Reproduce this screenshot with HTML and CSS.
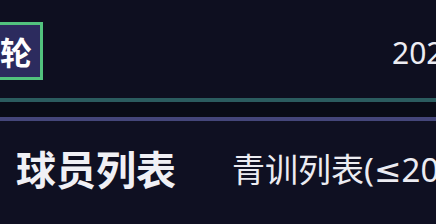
FILE: index.html
```html
<!DOCTYPE html>
<html lang="zh-CN">
<head>
    <meta charset="UTF-8">
    <meta name="viewport" content="width=device-width, initial-scale=1.0">
    <title>球员列表</title>
    <link rel="stylesheet" href="styles.css">
</head>
<body>
    <!-- 顶部：轮次 + 赛季 -->
    <div class="top-bar">
        <div class="round-badge">轮</div>
        <div class="season">2024-25赛季</div>
    </div>

    <div class="divider-gap"></div>

    <!-- 列表标题 -->
    <div class="list-head">
        <h2 class="list-title">球员列表</h2>
        <span class="list-sub">青训列表(≤20岁)</span>
    </div>
</body>
</html>
```

FILE: styles.css
```css
/* Reset */
* {
    margin: 0;
    padding: 0;
    box-sizing: border-box;
}

body {
    width: 436px;
    height: 224px;
    overflow: hidden;
    background-color: #0f1022;
    font-family: "Noto Sans", "DejaVu Sans", "Noto Sans CJK SC", sans-serif;
    color: #ececf2;
    white-space: nowrap;
}

/* Barra superior */
.top-bar {
    height: 102px;
    padding-top: 4px;
    display: flex;
    align-items: center;
    background-color: #0e0f20;
    border-bottom: 4px solid #2b5c5f;
}

.round-badge {
    flex-shrink: 0;
    height: 58px;
    display: flex;
    align-items: center;
    padding: 0 8px 0 0;
    background-color: #2c2b5e;
    border: 3px solid #52c27e;
    border-left: none;
    color: #ffffff;
    font-family: "Noto Sans CJK SC", sans-serif;
    font-size: 32px;
    font-weight: bold;
}

.season {
    flex-shrink: 0;
    margin-left: 349px;
    font-size: 30px;
    color: #ececf2;
}

.divider-gap {
    height: 15px;
    background-color: #090c17;
}

/* Cabeçalho da lista */
.list-head {
    height: 98px;
    padding-left: 16px;
    display: flex;
    align-items: center;
    border-top: 4px solid #44467a;
    background-color: #0f1022;
}

.list-title {
    flex-shrink: 0;
    font-family: "Noto Sans CJK SC", sans-serif;
    font-size: 40px;
    font-weight: bold;
    color: #f0f0f5;
}

.list-sub {
    flex-shrink: 0;
    margin-left: 56px;
    font-size: 33px;
    color: #ececf2;
}
```
